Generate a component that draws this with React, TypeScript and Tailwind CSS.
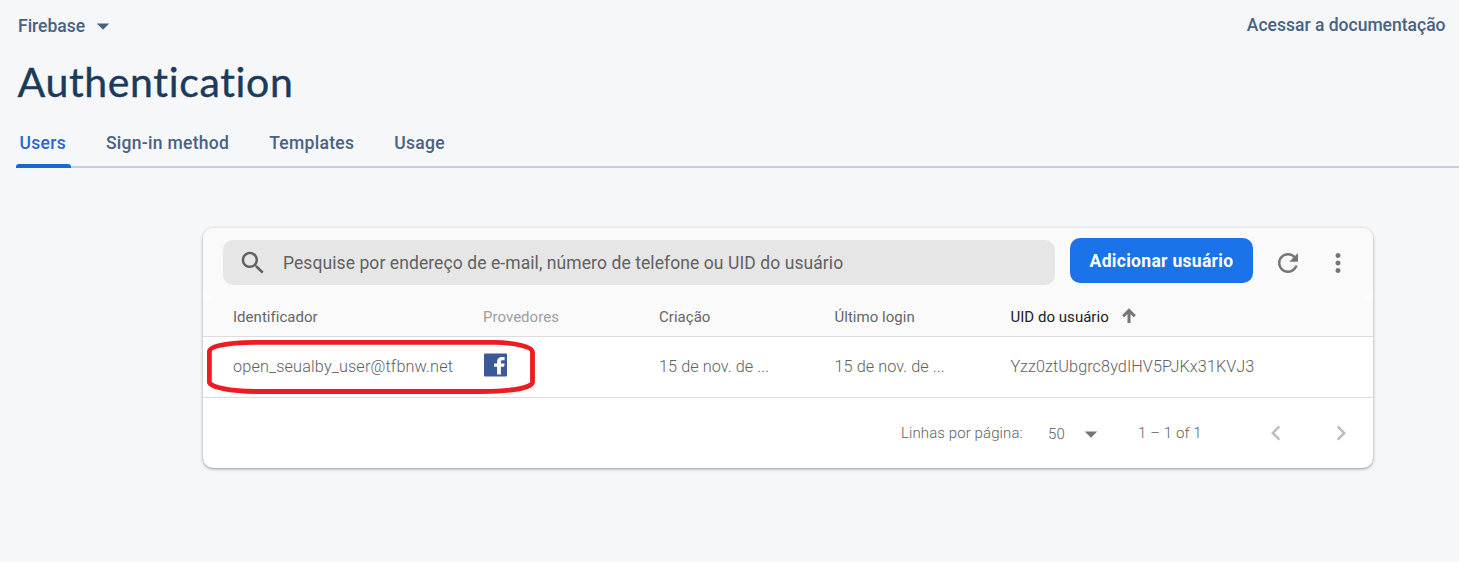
import type { ReactNode } from "react";

function Icon({ d, size, className = "" }: { d: string; size: number; className?: string }) {
  return (
    <svg width={size} height={size} viewBox="0 0 24 24" fill="currentColor" className={`shrink-0 ${className}`} aria-hidden="true">
      <path d={d} />
    </svg>
  );
}

const paths = {
  dropdown: "M7 10l5 5 5-5z",
  search:
    "M15.5 14h-.79l-.28-.27C15.41 12.59 16 11.11 16 9.5 16 5.91 13.09 3 9.5 3S3 5.91 3 9.5 5.91 16 9.5 16c1.61 0 3.09-.59 4.23-1.57l.27.28v.79l5 4.99L20.49 19l-4.99-5zm-6 0C7.01 14 5 11.99 5 9.5S7.01 5 9.5 5 14 7.01 14 9.5 11.99 14 9.5 14z",
  refresh:
    "M17.65 6.35C16.2 4.9 14.21 4 12 4c-4.42 0-7.99 3.58-7.99 8s3.57 8 7.99 8c3.73 0 6.84-2.55 7.73-6h-2.08c-.82 2.33-3.04 4-5.65 4-3.31 0-6-2.69-6-6s2.69-6 6-6c1.66 0 3.14.69 4.22 1.78L13 11h7V4l-2.35 2.35z",
  more: "M12 8c1.1 0 2-.9 2-2s-.9-2-2-2-2 .9-2 2 .9 2 2 2zm0 2c-1.1 0-2 .9-2 2s.9 2 2 2 2-.9 2-2-.9-2-2-2zm0 6c-1.1 0-2 .9-2 2s.9 2 2 2 2-.9 2-2-.9-2-2-2z",
  left: "M15.41 7.41L14 6l-6 6 6 6 1.41-1.41L10.83 12z",
  right: "M10 6L8.59 7.41 13.17 12l-4.58 4.59L10 18l6-6z",
};

function Tab({ children, active = false }: { children: ReactNode; active?: boolean }) {
  return (
    <div className={active ? "relative text-[#2a66d0]" : "relative text-[#476282]"}>
      {children}
      {active && <span className="absolute -left-[3.5px] top-[36px] h-1 w-[55px] rounded-t-[3px] bg-[#1967d2]" />}
    </div>
  );
}

export default function App() {
  return (
    <div className="h-[562px] w-full overflow-hidden bg-[#f6f7f9] font-['Roboto',sans-serif]">
      <header className="flex h-[50px] justify-between pl-[18px] pr-[13.5px] text-[17.5px] font-medium leading-6 text-[#476282]">
        <button className="mt-[14px] flex h-6 items-center">
          <span>Firebase</span>
          <Icon d={paths.dropdown} size={30} className="ml-[2.5px]" />
        </button>
        <a className="mt-[13px]">Acessar a documentação</a>
      </header>

      <h1 className="h-[78px] pl-[17.5px] pt-[7px] font-['Lato',sans-serif] text-[41px] leading-[50px] tracking-[0.65px] text-[#1a3b5c] [font-variant-ligatures:none] [-webkit-text-stroke:0.4px_#1a3b5c]">
        Authentication
      </h1>

      <nav className="ml-4 flex h-10 gap-10 border-b-2 border-[#c3d0e0] pl-[3.5px] text-[17.5px] font-medium leading-[30px] tracking-[0.29px]">
        <Tab active>Users</Tab>
        <Tab>Sign-in method</Tab>
        <Tab>Templates</Tab>
        <Tab>Usage</Tab>
      </nav>

      <main className="relative ml-[203px] mt-[60px] h-[240px] w-[1170px] rounded-[10px] bg-white shadow-[0_1px_4px_rgba(0,0,0,0.2),0_1px_2px_rgba(0,0,0,0.24)]">
        <div className="flex h-[70px] items-start rounded-[10px] bg-[#fafafa] pl-5 text-[#757575]">
          <label className="mt-3 flex h-[45px] w-[832px] items-center rounded-[10px] bg-[#e6e6e6] pl-[15px] text-[#616161]">
            <Icon d={paths.search} size={30} />
            <span className="ml-[15px] text-[17.5px] leading-6 tracking-[0.08px]">Pesquise por endereço de e-mail, número de telefone ou UID do usuário</span>
          </label>
          <button className="ml-[15px] mt-[10px] h-[45px] w-[183px] rounded-[10px] bg-[#1a73e8] text-[17.5px] font-bold leading-6 tracking-[0.3px] text-white">
            Adicionar usuário
          </button>
          <Icon d={paths.refresh} size={30} className="ml-5 mt-5" />
          <Icon d={paths.more} size={30} className="ml-5 mt-5" />
        </div>

        <div className="grid h-[39px] grid-cols-[250px_176px_175.5px_176px_1fr] items-center border-b border-[#dcdcdc] bg-[#fafafa] pl-[30px] text-[15px] leading-5 tracking-[0.03px] text-[#666]">
          <span>Identificador</span>
          <span className="text-[#9e9e9e]">Provedores</span>
          <span>Criação</span>
          <span>Último login</span>
          <span className="flex items-center text-[#212121]">
            UID do usuário
            <svg width="14" height="15" viewBox="0 0 14 15" className="-mt-[3px] ml-[13px]" fill="none" stroke="#757575">
              <path d="M7 15V2M1.2 8.2 7 2.400l5.800 5.800" strokeWidth="3" />
            </svg>
          </span>
        </div>

        <div className="grid h-[61px] grid-cols-[250px_176px_175.5px_176px_1fr] items-center border-b border-[#dcdcdc] pl-[30px] text-[16.25px] font-light leading-6 tracking-[0.06px] text-[#616161]">
          <span className="tracking-[0.14px]">open_seualby_user@tfbnw.net</span>
          <svg width="24" height="24" viewBox="0 0 24 24" className="-mt-[5px]" aria-label="Facebook">
            <rect x="1" y="0.5" width="23" height="23" rx="1" fill="#3b5998" />
            <path d="M17.900 21.500v-7.700h3.200l.5-3.400h-3.700V8.800c0-1 .5-1.500 1.600-1.500h2.100V4.100c-.3 0-1.400-.2-2.600-.2-3 0-4.900 1.600-4.900 4.500v2h-3v3.400h3v7.700z" fill="white" />
          </svg>
          <span>15 de nov. de ...</span>
          <span>15 de nov. de ...</span>
          <span>Yzz0ztUbgrc8ydIHV5PJKx31KVJ3</span>
        </div>

        <footer className="flex h-[70px] items-center pl-[698px] text-[15px] font-light leading-5 tracking-[0.1px] text-[#616161]">
          <span className="w-[147px]">Linhas por página:</span>
          <button className="flex w-[90px] items-center pt-[2px]">
            <span className="w-[28px] text-left">50</span>
            <Icon d={paths.dropdown} size={30} className="text-[#757575]" />
          </button>
          <span className="w-[122.5px]">1 – 1 of 1</span>
          <Icon d={paths.left} size={30} className="text-[#bdbdbd]" />
          <Icon d={paths.right} size={30} className="ml-[35px] text-[#bdbdbd]" />
        </footer>

        <svg className="pointer-events-none absolute left-[3px] top-[111px]" width="330" height="56" viewBox="0 0 330 56" fill="none">
          <path
            d="M3.400 12.500C3.400 7.500 18 3.800 48 3.400H289C308 3.700 326.500 7.500 326.500 13V43C326.500 48 309 52.300 276 52.500H52C24 52.300 3.400 48 3.400 43Z"
            stroke="#ed1c24"
            strokeWidth="4.8"
            strokeLinejoin="round"
          />
        </svg>
      </main>
    </div>
  );
}
